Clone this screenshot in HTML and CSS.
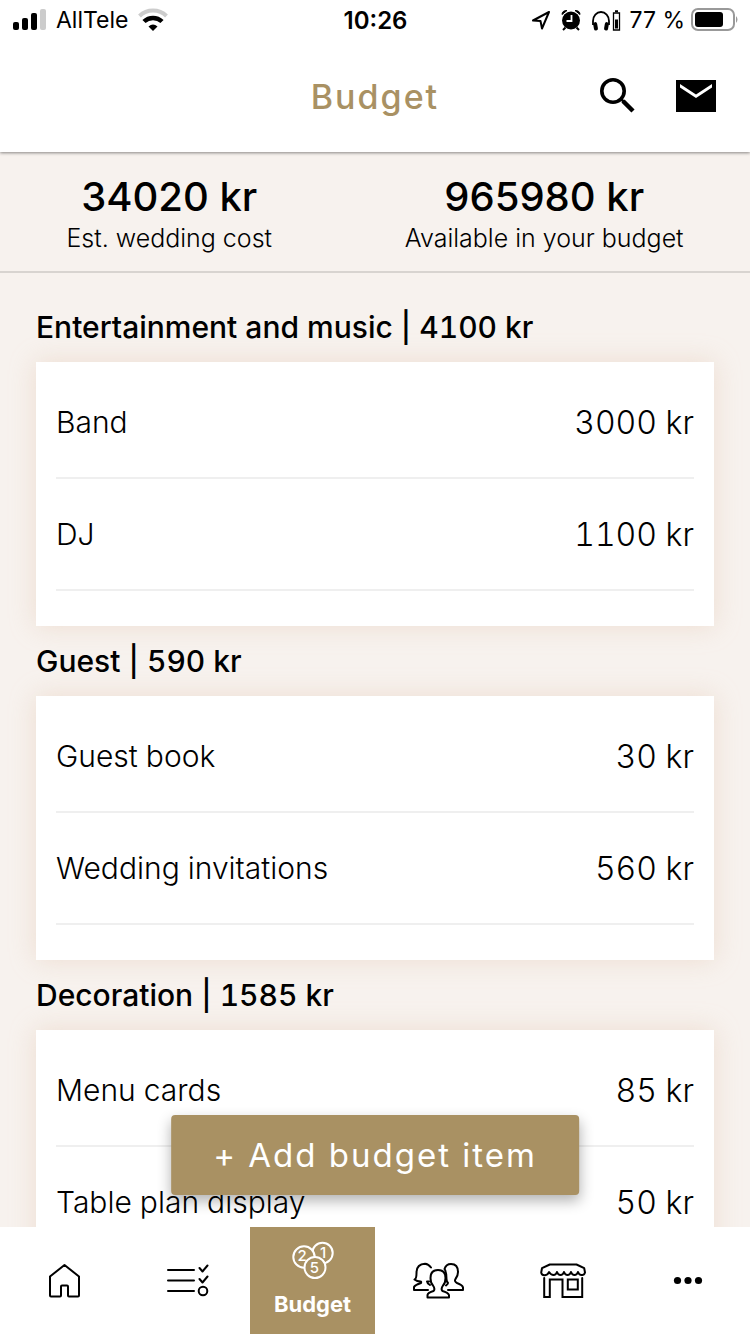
FILE: index.html
```html
<!DOCTYPE html>
<html lang="en">
<head>
<meta charset="utf-8">
<meta name="viewport" content="width=device-width, initial-scale=1">
<title>Budget</title>
<link rel="stylesheet" href="styles.css">
</head>
<body>
<div class="app">
  <div class="status">
    <div class="status-left">
      <svg width="34" height="24" viewBox="0 0 34 24" aria-hidden="true">
        <rect x="1" y="14" width="6" height="8" rx="2"/><rect x="10" y="10" width="6" height="12" rx="2"/><rect x="19" y="5" width="6" height="17" rx="2"/><rect x="28" y="1" width="6" height="21" rx="2" fill="#ccc"/>
      </svg>
      <span class="carrier">AllTele</span>
      <svg width="30" height="24" viewBox="0 0 30 24" fill="none" aria-hidden="true">
        <path d="M1.500 8a19.500 19.500 0 0 1 27 0" stroke="#ccc" stroke-width="4"/><path d="M6 13.500a13 13 0 0 1 18 0" stroke="#000" stroke-width="4.500"/><path d="M15 23l-4.500-4.500q4.500-4 9 0z" fill="#000"/>
      </svg>
    </div>
    <time class="clock">10:26</time>
    <div class="status-right">
      <svg width="20" height="24" viewBox="0 0 20 24" fill="none" stroke="#000" stroke-width="2" stroke-linejoin="round" aria-hidden="true"><path d="M18 4L2 12.500l7.500.5 1.500 7.500z"/></svg>
      <svg width="20" height="24" viewBox="0 0 20 24" aria-hidden="true"><circle cx="10" cy="12.500" r="9"/><path d="M4.500 19.500L2 22M15.500 19.500L18 22" stroke="#000" stroke-width="2"/><path d="M1 6.500Q1 2.500 6 2.500zM19 6.500q0-4-5-4z" stroke="#000"/><path d="M10.500 7v6H5.500" fill="none" stroke="#fff" stroke-width="1.800"/></svg>
      <svg width="30" height="24" viewBox="0 0 30 24" aria-hidden="true"><path d="M2 17v-4a8 9 0 0 1 16 0v4" fill="none" stroke="#000" stroke-width="1.800"/><rect x="2.500" y="14" width="4" height="8.500" rx="2" transform="rotate(-10 5 18)"/><rect x="13.500" y="14" width="4" height="8.500" rx="2" transform="rotate(10 15 18)"/><path d="M22.500 5h6v17h-6z" fill="none" stroke="#000" stroke-width="1.300"/><path d="M24 2.300h3v2h-3zM24 11.500h3v9h-3z"/></svg>
      <span class="percent">77 %</span>
      <svg width="48" height="24" viewBox="0 0 48 24" aria-hidden="true"><rect x="1" y="1" width="42" height="21" rx="6" fill="none" stroke="#999" stroke-width="2"/><rect x="4" y="4" width="28" height="15" rx="3"/><path d="M45 8q3 3.500 0 7z" fill="#999"/></svg>
    </div>
  </div>

  <header class="header">
    <h1 class="title">Budget</h1>
    <div class="actions">
      <button class="icon-button" type="button" aria-label="Search">
        <svg width="40" height="40" viewBox="0 0 40 40" fill="none" stroke="#000"><circle cx="15" cy="15" r="11.200" stroke-width="3.600"/><path d="M25 25l10 10" stroke-width="4.500"/><path d="M22.500 22.500l3 3" stroke-width="2.500"/></svg>
      </button>
      <button class="icon-button" type="button" aria-label="Messages">
        <svg width="40" height="40" viewBox="0 0 40 40"><path d="M0 4h40v32H0z"/><path d="M4 8v3.500l16 10.500 16-10.500V8l-16 10.500z" fill="#fff"/></svg>
      </button>
    </div>
  </header>

  <section class="summary">
    <div class="total"><strong class="total-value">34020 kr</strong><span class="total-label">Est. wedding cost</span></div>
    <div class="total"><strong class="total-value">965980 kr</strong><span class="total-label">Available in your budget</span></div>
  </section>

  <div class="content">
    <main class="scroll">
      <h2 class="group-title">Entertainment and music | 4100 kr</h2>
      <ul class="card">
        <li class="row"><span>Band</span><span class="amount">3000 kr</span></li>
        <li class="row"><span>DJ</span><span class="amount">1100 kr</span></li>
      </ul>
      <h2 class="group-title">Guest | 590 kr</h2>
      <ul class="card">
        <li class="row"><span>Guest book</span><span class="amount">30 kr</span></li>
        <li class="row"><span>Wedding invitations</span><span class="amount">560 kr</span></li>
      </ul>
      <h2 class="group-title">Decoration | 1585 kr</h2>
      <ul class="card">
        <li class="row"><span>Menu cards</span><span class="amount">85 kr</span></li>
        <li class="row"><span>Table plan display</span><span class="amount">50 kr</span></li>
      </ul>
    </main>
    <button class="add" type="button">+ Add budget item</button>
  </div>

  <nav class="tabs">
    <a class="tab" href="#home" aria-label="Home">
      <svg class="tab-icon" viewBox="0 0 52 40"><path d="M27.500 4L42 15.500V34.500q0 1-1 1H32q-1 0-1-1V25.500q0-1-1-1H25q-1 0-1 1V34.500q0 1-1 1H14q-1 0-1-1V15.500z"/></svg>
    </a>
    <a class="tab" href="#checklist" aria-label="Checklist">
      <svg class="tab-icon" viewBox="0 0 52 40"><path d="M6 9H32M6 19.500H32M6 30H32M37.500 7l3 3.500 5-6M37.500 18l3 3.500 5-6"/><circle cx="41" cy="30" r="4.300"/></svg>
    </a>
    <a class="tab tab-active" href="#budget" aria-current="page">
      <svg class="tab-icon" viewBox="0 0 52 40" aria-hidden="true"><g class="coins"><circle cx="35.500" cy="13" r="10.200"/><circle cx="17" cy="17" r="10.700"/><circle cx="28" cy="27.500" r="10.500"/></g><g class="coin-text"><text x="15" y="21">2</text><text x="36" y="18">1</text><text x="27.500" y="33">5</text></g></svg>
      <span>Budget</span>
    </a>
    <a class="tab" href="#guests" aria-label="Guests">
      <svg class="tab-icon" viewBox="0 0 52 40"><path d="M16 29H2V26Q3 24 9 22Q9.500 20.500 8.500 20.500Q5 20.500 2.500 18.500Q4.500 18 4.500 12Q4.500 3 13 2.800Q16.500 3 19 6.500M17 20.500H15Q15 22 18 24"/><path d="M15.500 36.500V34Q16 31.500 21.500 30Q23.500 28 21 24.500Q18.500 22 18.500 17Q18.500 9 26 9Q33.500 9 33.500 17Q33.500 22 31 24.500Q28.500 28 30.500 30Q36 31.500 37 34V36.500z"/><path d="M36 29H51V26.500Q50.500 24 45 22Q42 20.500 43.500 18Q46 15 46 11Q46 3 39 3Q34 3 32.500 8Q34.500 11 34.500 18Q34.500 20.500 36 22Q36 23 34 24.500"/></svg>
    </a>
    <a class="tab" href="#vendors" aria-label="Vendors">
      <svg class="tab-icon" viewBox="0 0 52 40"><path d="M4.200 11.500L5 7.200 12.800 3.500H39.500L47.200 7.200 48 11.500Q47 14.500 44.500 14Q42 14 41 11Q40 14 37.500 14Q35 14 34 11Q33 14 30.500 14Q28 14 27 11Q26 14 23.500 14Q21 14 20 11Q19 14 16.500 14Q14 14 12 11Q11 14 8 14.200Q4.500 14.500 4.200 11.500z"/><path d="M7.200 17V36H12.800V18.500H25.500V36H45.200V17M30.800 18.500H40.800V28.500H30.800z" stroke-linejoin="miter"/></svg>
    </a>
    <a class="tab" href="#more" aria-label="More">
      <svg class="tab-icon" viewBox="0 0 52 40"><g class="dots"><circle cx="15.500" cy="19.500" r="3.600"/><circle cx="26" cy="19.500" r="3.600"/><circle cx="36.500" cy="19.500" r="3.600"/></g></svg>
    </a>
  </nav>
</div>
</body>
</html>
```
FILE: styles.css
```css
* { box-sizing: border-box; }
body { margin: 0; color: #000; background: #f7f2ee; font-family: Inter, "Liberation Sans", sans-serif; }
svg { display: block; flex: none; }
button { font: inherit; border: 0; padding: 0; cursor: pointer; }
.app { display: flex; flex-direction: column; height: 100vh; }

.status { display: grid; grid-template-columns: 1fr auto 1fr; align-items: center; position: relative; z-index: 2; height: 40px; padding: 0 11px 0 12px; background: #fff; font-size: 23px; }
.status-left, .status-right { display: flex; align-items: center; gap: 10px; }
.status-right { justify-content: flex-end; }
.percent { margin: 0 -4px 0 -2px; }
.clock { font-size: 24px; font-weight: 600; }

.header { display: grid; grid-template-columns: 1fr auto 1fr; align-items: center; height: 112px; padding: 0 34px; background: #fff; box-shadow: 0 1px 3px rgba(0, 0, 0, .45); z-index: 1; }
.title { grid-column: 2; margin: 0; font-size: 34px; font-weight: 500; letter-spacing: 2px; color: #a99163; }
.actions { display: flex; justify-content: flex-end; gap: 38px; }
.icon-button { background: none; }

.summary { display: flex; justify-content: space-around; height: 121px; padding-top: 20px; border-bottom: 2px solid #d8d4d0; text-align: center; }
.total { display: flex; flex-direction: column; }
.total-value { font-size: 40px; line-height: 50px; font-weight: 500; }
.total-label { font-size: 25px; line-height: 32px; font-weight: 300; }

.content { position: relative; flex: 1; min-height: 0; }
.scroll { height: 100%; overflow: hidden; padding: 19px 36px 0; font-variant-numeric: tabular-nums; }
.group-title { margin: 0; font-size: 30px; line-height: 70px; font-weight: 500; }
.card { margin: 0; padding: 5px 20px 35px; list-style: none; background: #fff; box-shadow: 0 0 24px rgba(225, 190, 165, .4); }
.row { display: flex; justify-content: space-between; align-items: center; height: 112px; border-bottom: 2px solid #efefef; font-size: 30px; font-weight: 300; }
.amount { font-size: 32px; }
.add { position: absolute; left: 50%; bottom: 32px; transform: translateX(-50%); height: 80px; padding: 0 42px; border-radius: 4px; background: #a99163; color: #fff; font-size: 33px; letter-spacing: 2px; white-space: nowrap; box-shadow: 0 6px 14px rgba(0, 0, 0, .3); }

.tabs { display: grid; grid-template-columns: repeat(6, 1fr); height: 107px; background: #fff; }
.tab { display: flex; flex-direction: column; align-items: center; justify-content: center; gap: 10px; color: #000; text-decoration: none; font-size: 22px; line-height: 28px; font-weight: 700; }
.tab-active { padding-bottom: 4px; background: #a99163; color: #fff; }
.tab-icon { width: 52px; height: 40px; fill: none; stroke: currentColor; stroke-width: 2; stroke-linejoin: round; stroke-linecap: round; }
.coins { fill: #a99163; }
.coin-text { fill: #fff; stroke: none; font-size: 15px; font-weight: 500; text-anchor: middle; }
.dots { fill: #000; stroke: none; }
```
